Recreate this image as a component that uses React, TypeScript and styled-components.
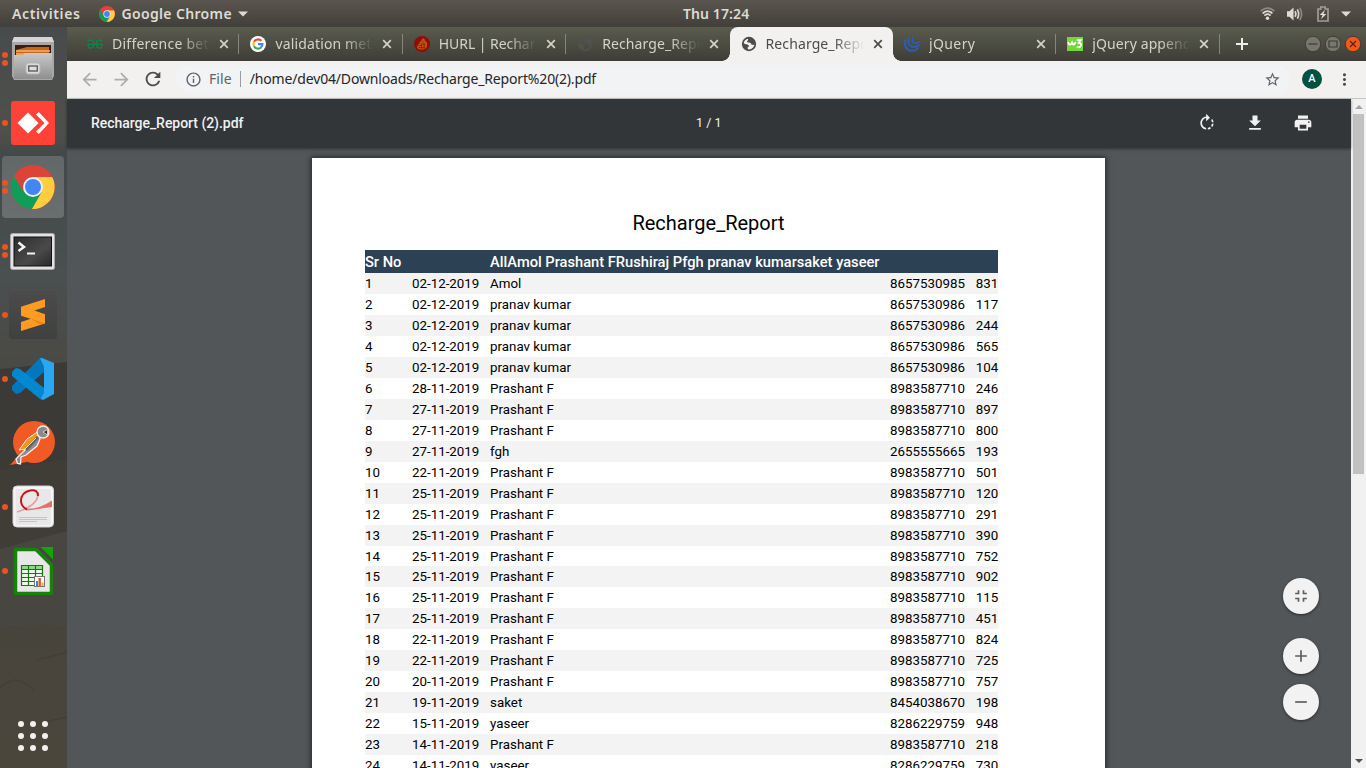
import React from 'react';
import styled, { createGlobalStyle } from 'styled-components';
import {
  MdAdd,
  MdArrowBack,
  MdArrowForward,
  MdFileDownload,
  MdFullscreenExit,
  MdInfoOutline,
  MdMoreVert,
  MdPrint,
  MdRefresh,
  MdRemove,
  MdRotateRight,
  MdStarBorder,
} from 'react-icons/md';

const uiFont = '"Noto Sans", "Open Sans", sans-serif';
const docFont = 'Roboto, "Liberation Sans", sans-serif';

const GlobalStyle = createGlobalStyle`
  *, *::before, *::after { box-sizing: border-box; }
  body { margin: 0; overflow: hidden; background: #525659; }
  svg { display: block; flex: none; }
`;

const Desktop = styled.div`
  display: flex;
  flex-direction: column;
  width: 1366px;
  height: 768px;
  overflow: hidden;
  font-family: ${uiFont};
`;

/* ---------- system bar ---------- */

const SystemBar = styled.header`
  display: grid;
  grid-template-columns: 671px auto 1fr;
  align-items: center;
  flex: none;
  height: 27px;
  padding: 0 15px 0 12px;
  background: linear-gradient(#5a564f, #413f3a);
  color: #dfdbd2;
`;

const SystemText = styled.span<{ $spacing?: number }>`
  font-size: 14px;
  font-weight: 600;
  line-height: 27px;
  white-space: nowrap;
  letter-spacing: ${(p) => p.$spacing ?? 0}px;
`;

const SystemLeft = styled.div`
  display: flex;
  align-items: center;
`;

const AppMenu = styled.div`
  display: flex;
  align-items: center;
  gap: 6px;
  margin-left: 19px;
`;

const SystemRight = styled.div`
  display: flex;
  align-items: center;
  justify-content: flex-end;
  gap: 12px;

  svg:nth-child(3) {
    margin-left: 2px;
  }
`;

/* ---------- dock ---------- */

const Workspace = styled.div`
  display: flex;
  flex: 1;
  min-height: 0;
`;

const Dock = styled.nav`
  position: relative;
  display: flex;
  flex-direction: column;
  flex: none;
  width: 67px;
  background: #4a4a46;
`;

const Wallpaper = styled.svg`
  position: absolute;
  inset: 0;
`;

const DockSlot = styled.div<{ $active?: boolean }>`
  position: relative;
  display: flex;
  align-items: center;
  height: 64px;
  width: 64px;

  &::before {
    content: '';
    position: absolute;
    inset: 1px 0 1px 2px;
    border-radius: 4px;
    background: ${(p) => (p.$active ? 'linear-gradient(#626767, #6a6e6f)' : 'transparent')};
  }
`;

const Markers = styled.div`
  position: relative;
  display: flex;
  flex-direction: column;
  gap: 2.5px;
  width: 6px;
  margin-left: 1.5px;
  margin-right: 1.5px;
`;

const Marker = styled.i`
  width: 6px;
  height: 6px;
  border-radius: 50%;
  background: #e95420;
`;

const DockIcon = styled.svg`
  position: relative;
`;

const DockLogo = styled.div`
  position: relative;
  padding: 2px;
`;

const AppGrid = styled.div`
  position: relative;
  display: grid;
  grid-template-columns: repeat(3, 6px);
  gap: 6px;
  margin: auto 0 17px 18px;
`;

const GridDot = styled.i`
  width: 6px;
  height: 6px;
  border-radius: 50%;
  background: #f2f1ee;
`;

/* ---------- browser ---------- */

const Browser = styled.main`
  display: flex;
  flex-direction: column;
  flex: 1;
  min-width: 0;
`;

const TabStrip = styled.div`
  display: flex;
  align-items: center;
  flex: none;
  height: 34px;
  padding: 0 5px 0 9px;
  background: linear-gradient(#5a5c4d, #3e3d38);
`;

const Tab = styled.div<{ $active?: boolean; $divider?: boolean }>`
  position: relative;
  display: flex;
  align-items: center;
  flex: none;
  width: 163.4px;
  height: 34px;
  padding-left: 11px;
  border-radius: 8px 8px 0 0;
  color: ${(p) => (p.$active ? '#4c4c4c' : '#d5d3c8')};
  background: ${(p) => (p.$active ? '#f2f1f0' : 'transparent')};

  &::before,
  &::after {
    content: '';
    position: absolute;
    bottom: 0;
    width: 8px;
    height: 8px;
    display: ${(p) => (p.$active ? 'block' : 'none')};
  }
  &::before {
    left: -8px;
    background: radial-gradient(circle at 0 0, transparent 7.5px, #f2f1f0 8px);
  }
  &::after {
    right: -8px;
    background: radial-gradient(circle at 100% 0, transparent 7.5px, #f2f1f0 8px);
  }
  ${(p) =>
    p.$divider &&
    `
    &::after {
      display: block;
      right: 0;
      top: 7px;
      width: 1px;
      height: 20px;
      background: #85857b;
    }`}
`;

const TabTitle = styled.span<{ $spacing: number }>`
  width: 100px;
  margin-left: 9px;
  margin-right: 7px;
  overflow: hidden;
  font-size: 14px;
  line-height: 20px;
  white-space: nowrap;
  letter-spacing: ${(p) => p.$spacing}px;
  mask-image: linear-gradient(90deg, #000 68px, transparent 98px);
`;

const NewTab = styled.div`
  margin-left: 16px;
`;

const WindowControls = styled.div`
  display: flex;
  gap: 4px;
  margin-left: auto;
`;

const Toolbar = styled.div`
  display: flex;
  align-items: center;
  flex: none;
  height: 38px;
  padding: 0 12px 1px 12px;
  background: #f2f1f0;
  border-bottom: 1px solid #c5c9c6;
  color: #4b4b4b;
`;

const NavButtons = styled.div`
  display: flex;
  align-items: center;
  gap: 11px;
  color: #4b4b4b;

  > svg {
    margin-left: -1px;
  }
`;

const Faded = styled.span`
  color: #adadab;
`;

const AddressBar = styled.div`
  display: flex;
  align-items: center;
  flex: 1;
  height: 28px;
  margin: 0 12px;
  padding: 0 9px 0 9px;
  border-radius: 14px;
  background: #f1f3f4;
  color: #5f6368;
`;

const Scheme = styled.span`
  margin-left: 7px;
  margin-bottom: 1px;
  padding-right: 8px;
  border-right: 1px solid #9a9da0;
  font-size: 14px;
  line-height: 16px;
  letter-spacing: 0.1px;
`;

const Address = styled.span`
  flex: 1;
  margin-left: 9px;
  margin-bottom: 1px;
  font-size: 14px;
  letter-spacing: -0.17px;
  white-space: nowrap;
  color: #262626;
`;

const Avatar = styled.div`
  width: 20px;
  height: 20px;
  margin-right: 13px;
  border-radius: 50%;
  background: #00513f;
  color: #fff;
  font: 500 11px/20px ${docFont};
  text-align: center;
`;

/* ---------- PDF viewer ---------- */

const Viewer = styled.section`
  display: flex;
  flex: 1;
  min-height: 0;
  background: #525659;
`;

const ViewerBody = styled.div`
  position: relative;
  display: flex;
  flex-direction: column;
  flex: 1;
`;

const ViewerBar = styled.div`
  position: relative;
  z-index: 1;
  display: grid;
  grid-template-columns: 605px auto 1fr;
  align-items: center;
  flex: none;
  height: 49px;
  padding: 0 38px 2px 24px;
  background: #323639;
  box-shadow: 0 1px 3px rgba(0, 0, 0, 0.4);
  color: #f1f1f1;
  font-family: ${docFont};
`;

const FileName = styled.span`
  font-size: 14px;
  font-weight: 500;
  letter-spacing: -0.04px;
`;

const PageCount = styled.span`
  font-size: 12.5px;
`;

const ViewerActions = styled.div`
  display: flex;
  justify-content: flex-end;
  gap: 28px;
`;

const Scroller = styled.div`
  flex: 1;
  min-height: 0;
  overflow: hidden;
  padding-top: 10px;
`;

const Sheet = styled.article`
  width: 793px;
  height: 1122px;
  margin-left: 245px;
  padding: 52px 0 0 53px;
  background: #fff;
  box-shadow: 0 0 5px 1px rgba(0, 0, 0, 0.55);
  color: #000;
  font-family: ${docFont};
`;

const ReportTitle = styled.h1`
  margin: 0 0 14px;
  padding-right: 53px;
  font-size: 20px;
  font-weight: 400;
  line-height: 26px;
  text-align: center;
`;

const columns = '47px 78.1px 400px 85.6px 22.3px';

const HeaderRow = styled.div`
  display: grid;
  grid-template-columns: ${columns};
  width: 633px;
  height: 23.32px;
  background: #2d4154;
  color: #fff;
  font-size: 14.67px;
  font-weight: 500;
  line-height: 24px;
  white-space: nowrap;
`;

const Row = styled.div<{ $striped: boolean }>`
  display: grid;
  grid-template-columns: ${columns};
  width: 633px;
  height: 20.95px;
  background: ${(p) => (p.$striped ? '#f3f3f3' : '#fff')};
  font-size: 13.33px;
  line-height: 21px;
  white-space: nowrap;
`;

const ZoomControls = styled.div`
  position: absolute;
  z-index: 2;
  right: 32px;
  bottom: 48px;
  display: flex;
  flex-direction: column;
  gap: 10px;
`;

const RoundButton = styled.div<{ $gapBelow?: number }>`
  display: flex;
  align-items: center;
  justify-content: center;
  width: 36px;
  height: 36px;
  margin-bottom: ${(p) => p.$gapBelow ?? 0}px;
  border-radius: 50%;
  background: #f2f2f2;
  color: #5c5c5c;
  box-shadow: 0 1px 3px rgba(0, 0, 0, 0.5);
`;

const Scrollbar = styled.div`
  display: flex;
  flex-direction: column;
  align-items: center;
  width: 15px;
  background: #f1f1f1;
`;

const ScrollArrow = styled.div`
  display: flex;
  align-items: center;
  justify-content: center;
  width: 15px;
  height: 15px;
`;

const Thumb = styled.div`
  width: 11px;
  height: 360px;
  margin-bottom: auto;
  background: #c1c1c1;
`;

/* ---------- drawings ---------- */

function ChromeLogo({ size }: { size: number }) {
  return (
    <svg width={size} height={size} viewBox="0 0 44 44">
      <circle cx="22" cy="22" r="22" fill="#db4437" />
      <path d="M3 11 A22 22 0 0 0 21 44 L31.5 27 L22 22 Z" fill="#0f9d58" />
      <path d="M41.2 12 H22 L31 26.5 L21 44 A22 22 0 0 0 41.2 12Z" fill="#ffcd40" />
      <path d="M3 11 A22 22 0 0 1 41.2 12 H22 L12.5 27Z" fill="#db4437" />
      <circle cx="22" cy="22" r="10" fill="#f1f1f1" />
      <circle cx="22" cy="22" r="8" fill="#4285f4" />
    </svg>
  );
}

const CloseGlyph = () => (
  <svg width="10" height="10" viewBox="0 0 10 10">
    <path d="M1.2 1.2 L8.8 8.8 M8.8 1.2 L1.2 8.8" stroke="currentColor" strokeWidth="1.7" />
  </svg>
);

const GeeksIcon = () => (
  <svg width="16" height="16" viewBox="0 0 16 16" fill="none" stroke="#12824a" strokeWidth="1.3">
    <path d="M.3 8.3H15.7M1 5.2C2.5 3.2 6.8 3.6 6.8 8C6.8 12.6 2 13.2 1.2 10.4V8.3M15 5.2C13.5 3.2 9.2 3.6 9.2 8C9.2 12.6 14 13.2 14.8 10.4V8.3" />
  </svg>
);

const GoogleIcon = () => (
  <svg width="16" height="16" viewBox="0 0 16 16" fill="none" strokeWidth="2.1">
    <circle cx="8" cy="8" r="8" fill="#fff" />
    <path d="M11.3 4.8A4.6 4.6 0 0 0 4 5.8" stroke="#ea4335" />
    <path d="M4 5.8A4.6 4.6 0 0 0 4 10.2" stroke="#fbbc05" />
    <path d="M4 10.2A4.6 4.6 0 0 0 11 11.5" stroke="#34a853" />
    <path d="M11 11.5A4.6 4.6 0 0 0 12.5 8.1H8" stroke="#4285f4" />
  </svg>
);

const HurlIcon = () => (
  <svg width="16" height="16" viewBox="0 0 16 16">
    <circle cx="8" cy="8" r="8" fill="#8e0e09" />
    <path d="M3 12L3.6 9L5.2 8L5.6 6.2L7.6 4.6L8 2.8L10.2 2.4L10.8 4.6L12.6 6L13.2 8.5L12.6 12L9.5 13.6L5.5 13.4Z" fill="#c2560f" />
    <path d="M4.4 9.6H8M4.6 11.6H11.4M8 8L11.6 9M8.2 5.6L10.4 6.2M7.4 7V12.8M10 7.2V13" stroke="#8a1b08" strokeWidth=".8" />
  </svg>
);

const GlobeIcon = ({ color }: { color: string }) => (
  <svg width="16" height="16" viewBox="0 0 16 16">
    <circle cx="8" cy="8" r="6.3" fill="none" stroke={color} strokeWidth="1.7" />
    <path d="M1.7 6.2L4 8.1L6.6 8.4L8.3 10L6.6 11.4L7 14.5C3.5 14 1.3 11 1.7 6.2ZM6.5 1.6L7.2 4L5.8 5.4L7 6.6L9.4 6.8L10.4 8.6L12.3 9L14.3 8C14.4 4.5 11 1.4 6.5 1.6Z" fill={color} />
  </svg>
);

const JQueryIcon = () => (
  <svg width="16" height="16" viewBox="0 0 16 16" fill="none" stroke="#2a5db4" strokeLinecap="round">
    <path d="M1.5 4C-1 9.5 3.2 15.8 9.8 14.6Q12 14.2 13.8 12.4" strokeWidth="2" />
    <path d="M5 2C3 6.2 5.2 11.2 10.3 11Q13 11 15 9" strokeWidth="1.9" />
    <path d="M9 1.3C7.4 4 8.8 7.4 12 7.4Q14 7.3 15.4 5.8" strokeWidth="1.6" />
  </svg>
);

const W3Icon = () => (
  <svg width="16" height="16" viewBox="0 0 16 16" fill="none" stroke="#fff" strokeWidth="1.8">
    <path d="M0 1H16V15H0Z" fill="#73d63c" stroke="none" />
    <path d="M1 6L1.8 8Q3.5 9.5 5 6.5Q6 9.5 7.5 8L8.8 6M9.8 4.1H13.8L11.8 6.8Q14.6 7.2 14 9.5Q13 12.3 9.8 10.8" />
  </svg>
);

const StatusIcons = () => (
  <>
    <svg width="15" height="15" viewBox="0 0 15 15" fill="none" strokeLinecap="round" strokeWidth="1.7">
      <path d="M1.3 4.7Q7.5-.5 13.7 4.7" stroke="#8d8a82" />
      <path d="M3.2 7Q7.5 3.4 11.8 7M5 9.2Q7.5 7 10 9.2" stroke="#dfdbd2" />
      <circle cx="7.5" cy="12.3" r="1.8" fill="#dfdbd2" />
    </svg>
    <svg width="16" height="14" viewBox="0 0 16 14" fill="none" strokeWidth="1.6">
      <path d="M0 4.2H2.5L6.5.6V13.4L2.5 9.8H0Z" fill="#dfdbd2" />
      <path d="M8 4.3Q9.8 7 8 9.7M10.3 2.4Q13 7 10.3 11.6" stroke="#dfdbd2" />
      <path d="M12.8.8Q16.4 7 12.8 13.2" stroke="#8d8a82" />
    </svg>
    <svg width="12" height="16" viewBox="0 0 12 16">
      <path d="M1 3H3.8V1H8.2V3H11V15H1Z" fill="none" stroke="#a09d95" strokeWidth="1.7" />
      <path d="M8 4L2.8 9H5.6L4 13.2L9.2 8H6.4Z" fill="#e8e5dd" />
    </svg>
    <svg width="10" height="6" viewBox="0 0 10 6">
      <path d="M0 .5H10L5 5.5Z" fill="#dfdbd2" />
    </svg>
  </>
);

const controls = ['M4.5 9H13.5', 'M5 6H13V12H5Z', 'M6 6L12 12M12 6L6 12'];

function FilesIcon() {
  return (
    <DockIcon width="48" height="48" viewBox="0 0 48 48">
      <defs>
        <linearGradient id="steel" x2="0" y2="1">
          <stop stopColor="#c9c9c9" />
          <stop offset="1" stopColor="#8f8f8f" />
        </linearGradient>
      </defs>
      <path d="M5 2H43L45 7V41L43 45H5L3 41V7Z" fill="#a8a8a8" />
      <path d="M5 2H43L45 7H3Z" fill="#d5d5d5" />
      <path d="M6 10H42V21H6Z" fill="#35200f" />
      <path d="M7 15L18 12H40V22H7Z" fill="#c7651d" />
      <path d="M7 16H41M7 19H41" stroke="#f3b271" strokeWidth="1.6" />
      <path d="M5 20H14L16 18H43V44H5Z" fill="url(#steel)" />
      <rect x="17" y="28" width="14" height="11" rx="2.5" fill="#dcdcdc" stroke="#b5b5b5" />
      <rect x="19.7" y="31" width="8.6" height="5" fill="#ddd" stroke="#555" strokeWidth="1.3" />
    </DockIcon>
  );
}

const AnyDeskIcon = () => (
  <DockIcon width="48" height="48" viewBox="0 0 48 48">
    <rect x="2" y="2" width="44" height="44" rx="3" fill="#ff4238" />
    <path d="M8.5 24L19 13.5L29.5 24L19 34.5Z" fill="#fff" />
    <path d="M27 15.5L35.5 24L27 32.5L29.8 35L40 24L29.8 13Z" fill="#fff" />
  </DockIcon>
);

const ChromeDockIcon = () => (
  <DockLogo>
    <ChromeLogo size={44} />
  </DockLogo>
);

const TerminalIcon = () => (
  <DockIcon width="48" height="48" viewBox="0 -1 48 48">
    <defs>
      <linearGradient id="screen" x2="1" y2="1">
        <stop stopColor="#2c2c2c" />
        <stop offset=".6" stopColor="#4a4a4a" />
        <stop offset="1" stopColor="#282828" />
      </linearGradient>
    </defs>
    <rect x="1.5" y="5.5" width="44" height="36" rx="2" fill="#e3e1e3" stroke="#a9a7a9" />
    <rect x="5" y="9" width="37.5" height="29" fill="url(#screen)" stroke="#111" />
    <path d="M9.5 14.5L15 19L9.5 23" fill="none" stroke="#f4f4f4" strokeWidth="2.5" />
    <path d="M18 25.5H26" stroke="#f4f4f4" strokeWidth="2" />
  </DockIcon>
);

const SublimeIcon = () => (
  <DockIcon width="48" height="48" viewBox="0 0 48 48">
    <defs>
      <linearGradient id="tile" x2="0" y2="1">
        <stop stopColor="#4a4b4a" />
        <stop offset="1" stopColor="#404040" />
      </linearGradient>
    </defs>
    <rect width="48" height="48" rx="3" fill="url(#tile)" />
    <path d="M12 31L36 23V32.5L12 40Z" fill="#ff9b22" />
    <path d="M22 28L36 23.5V32L31 33.6Z" fill="#e98517" />
    <path d="M36 8V16L25.5 19.5L36 23.2V32.3L12 24.8V15.7Z" fill="#ff9b22" />
  </DockIcon>
);

const CodeIcon = () => (
  <DockIcon width="48" height="48" viewBox="0 0 48 48">
    <path d="M3 31V35L7 39L11 38L35 17V4L31 3Z" fill="#0277bd" />
    <path d="M3 17L7 13L11 14L35 33V43L33 45L31 44L3 21Z" fill="#0288d1" />
    <path d="M33 3L45 8V39L34 45L32 43L35 38V12L31 3Z" fill="#2aa7f3" />
  </DockIcon>
);

const PostmanIcon = () => (
  <DockIcon width="48" height="48" viewBox="0 0 48 48">
    <circle cx="25" cy="23" r="21" fill="#f15a24" />
    <path d="M1 46L10 36L18 43Z" fill="#f15a24" />
    <path d="M7 40L16 31L27 21L29 17L31 20L28 27L17 36L12 38L11.5 45L8.5 44.5Z" fill="#8c8c8c" stroke="#eee" strokeWidth="1.3" />
    <path d="M10 31L18 20L29 12.5L31 16L18 30Z" fill="#f7941e" stroke="#eee" />
    <path d="M17 31L29 18" stroke="#666" strokeWidth="3" />
    <path d="M15 31L27 19" stroke="#eee" strokeWidth=".9" />
    <circle cx="34" cy="13" r="6" fill="#8a8a8a" stroke="#eee" strokeWidth="1.3" />
    <path d="M34 13L38.5 10.5V16Z" fill="#333" stroke="#ddd" strokeWidth=".9" />
  </DockIcon>
);

const EvinceIcon = () => (
  <DockIcon width="48" height="48" viewBox="0 0 48 48">
    <rect x="4" y="3" width="40.5" height="41" rx="4" fill="#f6f6f6" stroke="#cfcfcf" />
    <rect x="6.5" y="6" width="35.5" height="36" rx="1" fill="#e8e8e8" />
    <path d="M10 34.5H38M10 36.5H38M10 38.5H28" stroke="#c3c3c3" strokeWidth="1" />
    <path d="M8 29Q27 23 29 13" fill="none" stroke="#e79a9a" strokeWidth="1.5" />
    <path d="M16 25.5Q29 27 43 17.5V24Q30 26 19 27.5Z" fill="#e46f6f" />
    <path d="M29 13Q29 6 21 7.5Q12 9.5 12 18Q12.5 24 18 26.5" fill="none" stroke="#c41414" strokeWidth="2" />
  </DockIcon>
);

const CalcIcon = () => (
  <DockIcon width="48" height="48" viewBox="0 0 48 48">
    <path d="M6.5 2.5H27L42.5 18V46.5H6.5Z" fill="#e7e7e7" stroke="#18810b" strokeWidth="3.5" strokeLinejoin="round" />
    <path d="M31.5 0H44V12.5Z" fill="#18a303" />
    <path d="M12 18H34V39H12Z" fill="#8fd98a" />
    <path d="M13 23H33V38H13Z" fill="#eef8ee" />
    <path d="M12.5 18.5H33.5V38.5H12.5ZM12.5 22.5H33.5M12.5 26.5H33.5M12.5 30.5H33.5M12.5 34.5H33.5M19.5 18.5V38.5M26.5 18.5V38.5" fill="none" stroke="#137a0a" strokeWidth="1.2" />
    <rect x="25.5" y="29.5" width="10" height="10" fill="#fff" stroke="#777" />
    <path d="M28 39V34" stroke="#2e8bd0" strokeWidth="2" />
    <path d="M30.7 39V31" stroke="#e0571a" strokeWidth="2.4" />
    <path d="M33.5 39V35.5" stroke="#e8a820" strokeWidth="2" />
  </DockIcon>
);

/* ---------- data ---------- */

const dockItems = [
  { icon: <FilesIcon />, marks: 2 },
  { icon: <AnyDeskIcon />, marks: 1 },
  { icon: <ChromeDockIcon />, marks: 2, active: true },
  { icon: <TerminalIcon />, marks: 2 },
  { icon: <SublimeIcon />, marks: 1 },
  { icon: <CodeIcon />, marks: 1 },
  { icon: <PostmanIcon />, marks: 0 },
  { icon: <EvinceIcon />, marks: 1 },
  { icon: <CalcIcon />, marks: 1 },
];

const tabs = [
  { icon: <GeeksIcon />, title: 'Difference betw', spacing: 0.25, divider: true },
  { icon: <GoogleIcon />, title: 'validation meth', spacing: 0.15, divider: true },
  { icon: <HurlIcon />, title: 'HURL | Recharge', spacing: -0.05, divider: true },
  { icon: <GlobeIcon color="#50524f" />, title: 'Recharge_Repo', spacing: 0.1 },
  { icon: <GlobeIcon color="#4c4c4c" />, title: 'Recharge_Repo', spacing: 0.1, active: true },
  { icon: <JQueryIcon />, title: 'jQuery', spacing: 0.4, divider: true },
  { icon: <W3Icon />, title: 'jQuery append', spacing: 0.1, divider: true },
];

const rows: [string, string, string, string][] = [
  ['02-12-2019', 'Amol', '8657530985', '831'],
  ['02-12-2019', 'pranav kumar', '8657530986', '117'],
  ['02-12-2019', 'pranav kumar', '8657530986', '244'],
  ['02-12-2019', 'pranav kumar', '8657530986', '565'],
  ['02-12-2019', 'pranav kumar', '8657530986', '104'],
  ['28-11-2019', 'Prashant F', '8983587710', '246'],
  ['27-11-2019', 'Prashant F', '8983587710', '897'],
  ['27-11-2019', 'Prashant F', '8983587710', '800'],
  ['27-11-2019', 'fgh', '2655555665', '193'],
  ['22-11-2019', 'Prashant F', '8983587710', '501'],
  ['25-11-2019', 'Prashant F', '8983587710', '120'],
  ['25-11-2019', 'Prashant F', '8983587710', '291'],
  ['25-11-2019', 'Prashant F', '8983587710', '390'],
  ['25-11-2019', 'Prashant F', '8983587710', '752'],
  ['25-11-2019', 'Prashant F', '8983587710', '902'],
  ['25-11-2019', 'Prashant F', '8983587710', '115'],
  ['25-11-2019', 'Prashant F', '8983587710', '451'],
  ['22-11-2019', 'Prashant F', '8983587710', '824'],
  ['22-11-2019', 'Prashant F', '8983587710', '725'],
  ['20-11-2019', 'Prashant F', '8983587710', '757'],
  ['19-11-2019', 'saket', '8454038670', '198'],
  ['15-11-2019', 'yaseer', '8286229759', '948'],
  ['14-11-2019', 'Prashant F', '8983587710', '218'],
  ['14-11-2019', 'yaseer', '8286229759', '730'],
];

export default function App() {
  return (
    <Desktop>
      <GlobalStyle />
      <SystemBar>
        <SystemLeft>
          <SystemText $spacing={0.6}>Activities</SystemText>
          <AppMenu>
            <ChromeLogo size={16} />
            <SystemText $spacing={0.35}>Google Chrome</SystemText>
            <svg width="10" height="6" viewBox="0 0 10 6">
              <path d="M0 .5H10L5 5.5Z" fill="#dfdbd2" />
            </svg>
          </AppMenu>
        </SystemLeft>
        <SystemText $spacing={0.1}>Thu 17:24</SystemText>
        <SystemRight>
          <StatusIcons />
        </SystemRight>
      </SystemBar>

      <Workspace>
        <Dock>
          <Wallpaper width="67" height="741" viewBox="0 27 67 741">
            <defs>
              <linearGradient id="sky" x2="0" y2="1">
                <stop stopColor="#484b4c" />
                <stop offset=".3" stopColor="#4f504b" />
                <stop offset=".36" stopColor="#434849" />
                <stop offset=".7" stopColor="#4a4f50" />
                <stop offset="1" stopColor="#4a4943" />
              </linearGradient>
              <linearGradient id="sand" x2="0" y2="1">
                <stop stopColor="#47443c" />
                <stop offset="1" stopColor="#4b463c" />
              </linearGradient>
            </defs>
            <path d="M0 27H67V380H0Z" fill="url(#sky)" />
            <path d="M0 369L67 362V470H0Z" fill="#3b3a37" />
            <path d="M0 470L67 459V540L0 552Z" fill="#403d37" />
            <path d="M0 549L67 531V630H0Z" fill="#474641" />
            <path d="M0 627L45 624L67 626V768H0Z" fill="url(#sand)" />
            <path d="M0 688Q15 672 34 690M38 660L67 652M44 722L67 717" fill="none" stroke="#433f37" strokeWidth="1.5" />
          </Wallpaper>
          {dockItems.map((item, i) => (
            <DockSlot key={i} $active={item.active}>
              <Markers>
                {Array.from({ length: item.marks }, (_, m) => (
                  <Marker key={m} />
                ))}
              </Markers>
              {item.icon}
            </DockSlot>
          ))}
          <AppGrid>
            {Array.from({ length: 9 }, (_, i) => (
              <GridDot key={i} />
            ))}
          </AppGrid>
        </Dock>

        <Browser>
          <TabStrip>
            {tabs.map((tab, i) => (
              <Tab key={i} $active={tab.active} $divider={tab.divider}>
                {tab.icon}
                <TabTitle $spacing={tab.spacing}>{tab.title}</TabTitle>
                <CloseGlyph />
              </Tab>
            ))}
            <NewTab>
              <svg width="12" height="12" viewBox="0 0 12 12">
                <path d="M6 0V12M0 6H12" stroke="#eeeeec" strokeWidth="2" />
              </svg>
            </NewTab>
            <WindowControls>
              {controls.map((d, i) => (
                <svg key={d} width="16" height="18" viewBox="1 0 16 18">
                  <circle cx="9" cy="9" r="7.7" fill={i === 2 ? '#ef5a1c' : '#78766d'} stroke="#35342f" strokeWidth=".8" />
                  <path d={d} fill="none" stroke={i === 2 ? '#5f2108' : '#3c3b37'} strokeWidth="1.2" />
                </svg>
              ))}
            </WindowControls>
          </TabStrip>

          <Toolbar>
            <NavButtons>
              <Faded>
                <MdArrowBack size={21} />
              </Faded>
              <Faded>
                <MdArrowForward size={21} />
              </Faded>
              <MdRefresh size={22} />
            </NavButtons>
            <AddressBar>
              <MdInfoOutline size={17} />
              <Scheme>File</Scheme>
              <Address>/home/dev04/Downloads/Recharge_Report%20(2).pdf</Address>
              <MdStarBorder size={17} />
            </AddressBar>
            <Avatar>A</Avatar>
            <MdMoreVert size={19} />
          </Toolbar>

          <Viewer>
            <ViewerBody>
              <ViewerBar>
                <FileName>Recharge_Report (2).pdf</FileName>
                <PageCount>1 / 1</PageCount>
                <ViewerActions>
                  <MdRotateRight size={20} />
                  <MdFileDownload size={20} />
                  <MdPrint size={20} />
                </ViewerActions>
              </ViewerBar>
              <Scroller>
                <Sheet>
                  <ReportTitle>Recharge_Report</ReportTitle>
                  <HeaderRow>
                    <span>Sr No</span>
                    <span />
                    <span>AllAmol Prashant FRushiraj Pfgh pranav kumarsaket yaseer</span>
                  </HeaderRow>
                  {rows.map(([date, name, phone, amount], i) => (
                    <Row key={i} $striped={i % 2 === 0}>
                      <span>{i + 1}</span>
                      <span>{date}</span>
                      <span>{name}</span>
                      <span>{phone}</span>
                      <span>{amount}</span>
                    </Row>
                  ))}
                </Sheet>
              </Scroller>
              <ZoomControls>
                <RoundButton $gapBelow={14}>
                  <MdFullscreenExit size={20} />
                </RoundButton>
                <RoundButton>
                  <MdAdd size={20} />
                </RoundButton>
                <RoundButton>
                  <MdRemove size={20} />
                </RoundButton>
              </ZoomControls>
            </ViewerBody>
            <Scrollbar>
              <ScrollArrow>
                <svg width="8" height="4" viewBox="0 0 8 4">
                  <path d="M0 4L4 0L8 4Z" fill="#a3a3a3" />
                </svg>
              </ScrollArrow>
              <Thumb />
              <ScrollArrow>
                <svg width="8" height="4" viewBox="0 0 8 4">
                  <path d="M0 0H8L4 4Z" fill="#505050" />
                </svg>
              </ScrollArrow>
            </Scrollbar>
          </Viewer>
        </Browser>
      </Workspace>
    </Desktop>
  );
}
